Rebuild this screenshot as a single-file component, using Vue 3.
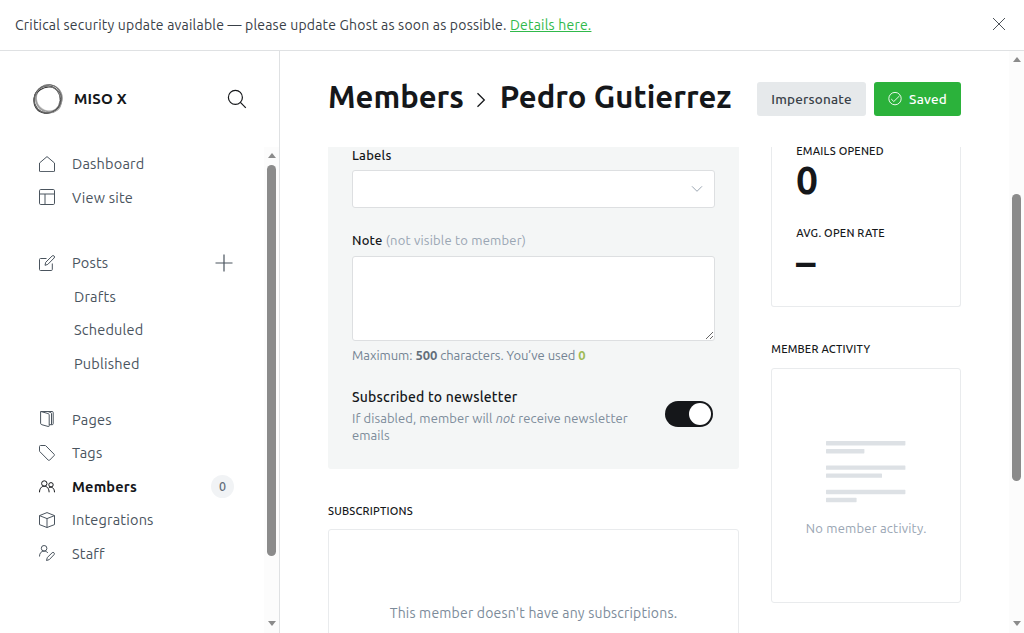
<script setup>
const primaryNav = [
  { label: 'Dashboard', icon: 'home' },
  { label: 'View site', icon: 'site' },
]
const postNav = ['Drafts', 'Scheduled', 'Published']
const manageNav = [
  { label: 'Pages', icon: 'pages' },
  { label: 'Tags', icon: 'tags' },
  { label: 'Members', icon: 'members', active: true, count: 0 },
  { label: 'Integrations', icon: 'box' },
  { label: 'Staff', icon: 'staff' },
]
const icons = {
  home: ['M.5 7v8a.6.6 0 0 0 .6.6h13.800a.6.6 0 0 0 .6-.6V7', 'M.5 7 8 .6 15.5 7'],
  site: ['M1.700.5h12.600a1.200 1.200 0 0 1 1.200 1.200v12.600a1.200 1.200 0 0 1-1.200 1.200h-12.600a1.200 1.200 0 0 1-1.200-1.200v-12.600a1.200 1.200 0 0 1 1.200-1.200z', 'M.5 5h15M6 5v10.500'],
  edit: ['M7.5 3.5h-6a1 1 0 0 0-1 1v10a1 1 0 0 0 1 1h10.8a1 1 0 0 0 1-1V8.5', 'M6 10.3l.7-3 6.400-6.300a1.350 1.350 0 0 1 2 2L8.800 9.400z'],
  pages: ['M1.800.5h11.400a1 1 0 0 1 1 1v11.200a1 1 0 0 1-1 1h-3', 'M1.800.5 9.300 2.600a1.400 1.400 0 0 1 .9 1.300v10.900a.7.7 0 0 1-.9.7l-6.500-1.800a1.600 1.600 0 0 1-1.200-1.500V1a.5.5 0 0 1 .4-.5z', 'M9 .5 11.800 1.600a1 1 0 0 1 .7.9v11.200'],
  tags: ['M.5 5.900V1.500a1 1 0 0 1 1-1h4.600a1 1 0 0 1 .7.3l8.400 8.500a.9.9 0 0 1 0 1.200l-4.600 4.700a.9.9 0 0 1-1.300 0L.8 6.600a1 1 0 0 1-.3-.7z'],
  members: ['M5.300 2.800a2.700 2.700 0 1 0 0 5.400 2.700 2.700 0 1 0 0-5.400z', 'M.5 14.300c0-3.600 1.900-6.100 4.800-6.100s4.800 2.500 4.800 6.100', 'M12 4.600a2.200 2.200 0 1 0 0 4.400 2.200 2.200 0 1 0 0-4.400z', 'M9.800 9.700c2.900-1.700 5.700.6 5.700 4.600'],
  box: ['M8 .6 15.500 3.600v9L8 15.500.5 12.600v-9z', 'M.5 3.600 8 6.600l7.500-3M8 6.600v8.900'],
  staff: ['M5.100.5a2.800 2.800 0 1 0 0 5.600 2.800 2.800 0 1 0 0-5.600z', 'M.5 11.500c0-3.300 1.700-5.400 4.600-5.400 1.700 0 3 .7 3.800 1.900', 'M7.500 15.500l.8-3 4.800-4.700a1.300 1.300 0 0 1 1.900 1.900l-4.700 4.900z'],
}
const skeletonBars = [
  { y: 0, w: 79.4 }, { y: 8, w: 38.4 },
  { y: 24.4, w: 79.4 }, { y: 32.4, w: 56 },
  { y: 48.8, w: 79.4 }, { y: 56.8, w: 30.6 },
]
</script>

<template>
  <div class="app">
    <div class="banner">
      <p>Critical security update available — please update Ghost as soon as possible. <a>Details here.</a></p>
      <svg class="close" width="14" height="14" viewBox="0 0 14 14"><path d="M1 1l12 12M13 1 1 13" /></svg>
    </div>

    <div class="shell">
      <aside class="sidebar">
        <header class="site">
          <svg class="logo" width="32" height="32" viewBox="0 0 32 32">
            <ellipse cx="17.200" cy="14.900" rx="12.900" ry="13.100" class="wash" />
            <ellipse cx="15.300" cy="16.500" rx="13.400" ry="13.700" />
            <ellipse cx="16.800" cy="15" rx="13" ry="13.300" transform="rotate(20 16 16)" class="faint" />
            <ellipse cx="15" cy="16.700" rx="14" ry="12.700" transform="rotate(-35 16 16)" />
            <ellipse cx="16.700" cy="16" rx="13.800" ry="12.400" transform="rotate(50 16 16)" class="faint" />
            <ellipse cx="16.500" cy="16.800" rx="13.500" ry="12.900" transform="rotate(95 16 16)" class="mid" />
            <ellipse cx="16" cy="15.700" rx="14.500" ry="13.500" transform="rotate(-60 16 16)" class="mid" />
          </svg>
          <strong>MISO X</strong>
          <svg class="search" width="20" height="20" viewBox="0 0 20 20"><circle cx="8.400" cy="8.400" r="7" /><path d="M13.400 13.400 18.800 18.800" /></svg>
        </header>
        <div class="nav-area">
          <nav>
            <ul>
              <li v-for="n in primaryNav" :key="n.label">
                <svg class="icon" width="16" height="16" viewBox="0 0 16 16"><path v-for="d in icons[n.icon]" :key="d" :d="d" /></svg>
                <span>{{ n.label }}</span>
              </li>
            </ul>
            <ul class="posts">
              <li>
                <svg class="icon" width="16" height="16" viewBox="0 0 16 16"><path v-for="d in icons.edit" :key="d" :d="d" /></svg>
                <span>Posts</span>
                <svg class="plus" width="18" height="18" viewBox="0 0 18 18"><path d="M9 .5v17M.5 9h17" /></svg>
              </li>
              <li v-for="label in postNav" :key="label" class="sub"><span>{{ label }}</span></li>
            </ul>
            <ul class="manage">
              <li v-for="n in manageNav" :key="n.label" :class="{ active: n.active }">
                <svg class="icon" width="16" height="16" viewBox="0 0 16 16"><path v-for="d in icons[n.icon]" :key="d" :d="d" /></svg>
                <span>{{ n.label }}</span>
                <span v-if="n.active" class="count">{{ n.count }}</span>
              </li>
            </ul>
          </nav>
          <div class="scrollbar nav-scroll"><i class="up"></i><b></b><i class="down"></i></div>
        </div>
      </aside>

      <main>
        <div class="page">
          <header class="head">
            <h1>
              <span class="crumb">Members</span>
              <svg width="10" height="16" viewBox="0 0 10 16"><path d="M1.500 1.300 8.300 8 1.500 14.700" /></svg>
              <span>Pedro Gutierrez</span>
            </h1>
            <button class="btn impersonate">Impersonate</button>
            <button class="btn saved">
              <svg width="14" height="14" viewBox="0 0 14 14"><circle cx="7" cy="6.600" r="6.200" /><path d="M3.200 7 5.800 9.500 11.500 3.900" /></svg>
              <span>Saved</span>
            </button>
          </header>

          <div class="columns">
            <section class="left">
              <div class="form">
                <label>Labels</label>
                <div class="select"><svg width="12" height="8" viewBox="0 0 12 8"><path d="M1 1.300 6 6.300l5-5" /></svg></div>
                <label class="note">Note <em>(not visible to member)</em></label>
                <textarea></textarea>
                <p class="limit">Maximum: <b>500</b> characters. You’ve used <b class="used">0</b></p>
                <div class="newsletter">
                  <div>
                    <h4>Subscribed to newsletter</h4>
                    <p>If disabled, member will <i>not</i> receive newsletter<br>emails</p>
                  </div>
                  <span class="toggle"><span></span></span>
                </div>
              </div>
              <h5>SUBSCRIPTIONS</h5>
              <div class="card subs"><span>This member doesn't have any subscriptions.</span></div>
            </section>

            <section class="right">
              <div class="card stats">
                <h6>EMAILS OPENED</h6>
                <div class="figure">0</div>
                <h6 class="rate">AVG. OPEN RATE</h6>
                <div class="figure">–</div>
              </div>
              <h5>MEMBER ACTIVITY</h5>
              <div class="card activity">
                <svg width="80" height="62" viewBox="0 0 80 62">
                  <rect v-for="b in skeletonBars" :key="b.y" x="0" :y="b.y" :width="b.w" height="4.400" rx=".6" />
                </svg>
                <span>No member activity.</span>
              </div>
            </section>
          </div>
        </div>
        <div class="scrollbar main-scroll"><i class="up"></i><b></b><i class="down"></i></div>
      </main>
    </div>
  </div>
</template>

<style>
html, body { margin: 0; overflow: hidden; background: #fff; }
</style>

<style scoped>
* { box-sizing: border-box; }
.app { width: 1024px; height: 633px; overflow: hidden; display: flex; flex-direction: column; font-family: Ubuntu, "Noto Sans", "Open Sans", sans-serif; color: #15171a; font-size: 14px; letter-spacing: .2px; white-space: nowrap; }
svg { fill: none; stroke: currentColor; flex: none; }
ul, p, h1, h4, h5, h6 { margin: 0; padding: 0; list-style: none; }
.banner { height: 51px; flex: none; border-bottom: 1px solid #dfe1e3; display: flex; align-items: center; justify-content: space-between; padding: 0 18px 0 15px; color: #394047; }
.banner p { line-height: 20px; }
.banner a { color: #30b94b; text-decoration: underline; }
.close { margin-top: -2px; stroke: #394047; stroke-width: .9; }
.shell { flex: 1; min-height: 0; display: flex; }

.sidebar { width: 280px; flex: none; border-right: 1px solid #dfe1e3; display: flex; flex-direction: column; }
.site { height: 96px; flex: none; display: flex; align-items: center; padding: 0 32px; }
.logo { stroke: #333; stroke-width: 1; margin-right: 10px; }
.logo .faint { stroke: #999; }
.logo .mid { stroke: #666; stroke-width: .8; }
.logo .wash { stroke: #c4c4c4; stroke-width: 1.300; }
.site strong { font-size: 15px; font-weight: 700; line-height: 20px; margin-top: -1px; }
.search { margin-left: auto; stroke-width: 1.200; }
.nav-area { flex: 1; min-height: 0; display: flex; color: #4a545e; }
nav { flex: 1; font-size: 14.5px; }
nav .posts { margin-top: 32px; }
nav .manage { margin-top: 22.500px; }
nav li { height: 33.500px; display: flex; align-items: center; padding: 0 30px 0 39px; }
nav li.sub { padding-left: 74px; }
.icon { margin-right: 17px; stroke-width: 1; stroke-linejoin: round; }
.plus { margin-left: auto; margin-right: 1px; stroke-width: 1.200; }
.active { color: #15171a; font-weight: 700; }
.count { margin-left: auto; min-width: 23px; height: 23px; border-radius: 12px; background: #f1f3f5; color: #626d79; font-size: 12.500px; font-weight: 500; letter-spacing: 0; display: flex; align-items: center; justify-content: center; }

.scrollbar { width: 15px; flex: none; background: #fcfcfc; display: flex; flex-direction: column; align-items: center; }
.scrollbar b { width: 9px; border-radius: 5px; background: #8b8b8b; }
.scrollbar i { border: 4.500px solid transparent; width: 0; height: 0; }
.scrollbar .up { border-top: 0; border-bottom: 5px solid #8b8b8b; margin: 6px 0 7px; }
.scrollbar .down { border-bottom: 0; border-top: 5px solid #8b8b8b; margin: auto 0 7px; }
.nav-scroll b { height: 391px; }
.main-scroll b { height: 287px; margin-top: 125px; }

main { flex: 1; min-width: 0; display: flex; }
.page { flex: 1; min-width: 0; padding: 0 48px; display: flex; flex-direction: column; }
.head { height: 96px; flex: none; display: flex; align-items: center; }
h1 { flex: 1; display: flex; align-items: center; font-size: 31px; font-weight: 600; line-height: 40px; letter-spacing: 0; padding-bottom: 5px; }
h1 svg { margin: 6px 14px 0 13px; stroke-width: 1.300; }
h1 .crumb { width: 134.700px; }
.btn { height: 34px; border: 0; border-radius: 3px; display: flex; align-items: center; justify-content: center; font-family: inherit; font-size: 13.500px; font-weight: 500; letter-spacing: .2px; padding: 0; }
.impersonate { width: 109px; background: #e6e9eb; color: #394047; margin-right: 8px; }
.saved { width: 87px; background: #2bb23b; color: #fff; gap: 7px; }
.saved svg { stroke-width: .9; }
.columns { flex: 1; min-height: 0; margin-top: -4px; padding-top: 4px; overflow: hidden; display: flex; gap: 32px; }
.left { width: 411px; flex: none; }
.form { height: 322px; background: #f4f6f6; border-radius: 0 0 3px 3px; padding: 0 24px; }
label { display: block; font-size: 13px; font-weight: 500; line-height: 16px; }
.select { margin-top: 7px; height: 38px; border: 1px solid #dddfe1; border-radius: 3px; background: #fff; display: flex; align-items: center; justify-content: flex-end; padding-right: 10.800px; color: #9ba6b2; }
.note { margin-top: 24px; }
.note em { font-style: normal; font-weight: 400; color: #99a5b3; }
textarea { display: block; margin: 8px 0 0; width: 363px; height: 85px; border: 1px solid #dddfe1; border-radius: 3px; background: #fff; resize: vertical; overflow: hidden; }
.limit { margin-top: 5px; line-height: 18px; font-size: 13px; letter-spacing: -.04px; color: #738393; }
.limit b { font-weight: 700; color: #626d79; }
.limit .used { color: #9fbb58; }
.newsletter { margin-top: 22px; display: flex; justify-content: space-between; }
h4 { font-size: 14px; font-weight: 500; line-height: 22px; }
.newsletter p { font-size: 13px; letter-spacing: .08px; line-height: 17px; color: #7c8b9a; margin-top: 2px; }
.toggle { width: 48px; height: 26px; border-radius: 13px; background: #15171a; margin: 15px 2px 0 0; padding: 2px; display: flex; justify-content: flex-end; }
.toggle span { width: 22px; height: 22px; border-radius: 50%; background: #fff; }
h5, h6 { font-size: 11px; font-weight: 500; line-height: 16px; }
.left h5 { margin: 34px 0 10px; }
.card { border: 1px solid #e9ebed; border-radius: 3px; }
.subs { height: 168px; display: flex; align-items: center; justify-content: center; color: #7c8b9a; }
.right { width: 190px; flex: none; }
.stats { height: 160px; border-top: 0; border-radius: 0 0 3px 3px; padding: 0 24px; display: flex; flex-direction: column; }
.stats h6 { line-height: 8px; padding-left: .3px; }
.figure { height: 45px; line-height: 45px; font-size: 39px; font-weight: 700; letter-spacing: 0; margin-top: 2px; }
.stats h6.rate { line-height: 16px; margin-top: 23px; }
.rate + .figure { margin-top: -2px; }
.right h5 { margin: 34px 0 11px; padding-left: .3px; }
.activity { height: 235px; display: flex; flex-direction: column; align-items: center; padding-top: 72px; font-size: 13px; color: #99a5b3; }
.activity svg { fill: #dde1e5; stroke: none; }
.activity span { margin-top: 15px; padding-left: .4px; line-height: 20px; }
</style>
